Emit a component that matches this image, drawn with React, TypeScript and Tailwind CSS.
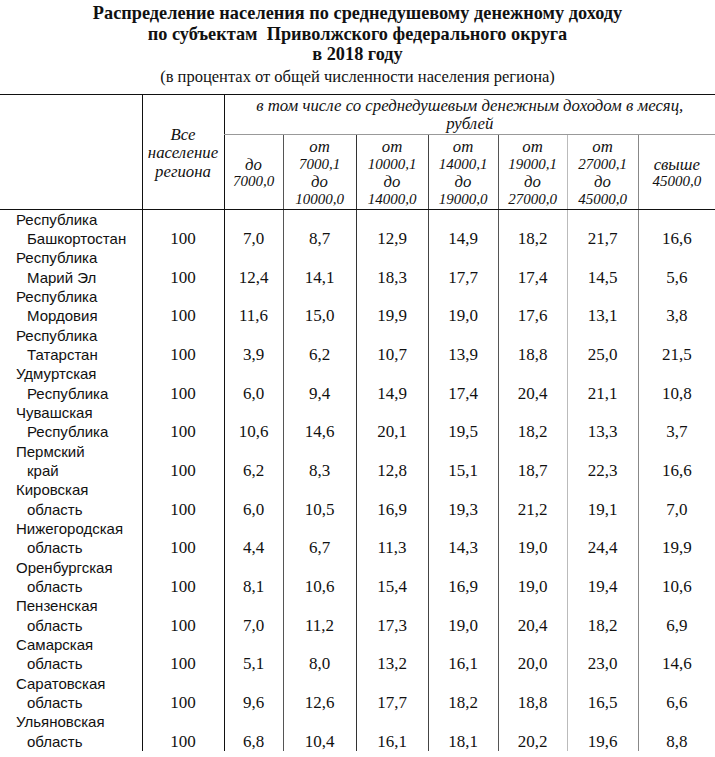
const rows: [string, string, string[]][] = [
  ["Республика", "Башкортостан", ["7,0", "8,7", "12,9", "14,9", "18,2", "21,7", "16,6"]],
  ["Республика", "Марий Эл", ["12,4", "14,1", "18,3", "17,7", "17,4", "14,5", "5,6"]],
  ["Республика", "Мордовия", ["11,6", "15,0", "19,9", "19,0", "17,6", "13,1", "3,8"]],
  ["Республика", "Татарстан", ["3,9", "6,2", "10,7", "13,9", "18,8", "25,0", "21,5"]],
  ["Удмуртская", "Республика", ["6,0", "9,4", "14,9", "17,4", "20,4", "21,1", "10,8"]],
  ["Чувашская", "Республика", ["10,6", "14,6", "20,1", "19,5", "18,2", "13,3", "3,7"]],
  ["Пермский", "край", ["6,2", "8,3", "12,8", "15,1", "18,7", "22,3", "16,6"]],
  ["Кировская", "область", ["6,0", "10,5", "16,9", "19,3", "21,2", "19,1", "7,0"]],
  ["Нижегородская", "область", ["4,4", "6,7", "11,3", "14,3", "19,0", "24,4", "19,9"]],
  ["Оренбургская", "область", ["8,1", "10,6", "15,4", "16,9", "19,0", "19,4", "10,6"]],
  ["Пензенская", "область", ["7,0", "11,2", "17,3", "19,0", "20,4", "18,2", "6,9"]],
  ["Самарская", "область", ["5,1", "8,0", "13,2", "16,1", "20,0", "23,0", "14,6"]],
  ["Саратовская", "область", ["9,6", "12,6", "17,7", "18,2", "18,8", "16,5", "6,6"]],
  ["Ульяновская", "область", ["6,8", "10,4", "16,1", "18,1", "20,2", "19,6", "8,8"]],
];

// left border colour of each income column (they differ in the scan)
const colBorder = [
  "border-l-[#111]",
  "border-l-[#555]",
  "border-l-[#333]",
  "border-l-[#444]",
  "border-l-[#555]",
  "border-l-[#bbb]",
  "border-l-[#888]",
];

const ranges: string[][] = [
  ["до", "7000,0"],
  ["от", "7000,1", "до", "10000,0"],
  ["от", "10000,1", "до", "14000,0"],
  ["от", "14000,1", "до", "19000,0"],
  ["от", "19000,1", "до", "27000,0"],
  ["от", "27000,1", "до", "45000,0"],
  ["свыше", "45000,0"],
];

const serif = "font-['Liberation_Serif','Times_New_Roman',serif]";

export default function App() {
  return (
    <div className={`w-[715px] h-[757px] overflow-hidden bg-white text-[#111] ${serif}`}>
      <div className="pt-[3px] text-center">
        <h1 className="text-[18.3px] leading-[20.5px] font-bold">
          Распределение населения по среднедушевому денежному доходу
          <br />
          по субъектам&nbsp; Приволжского федерального округа
          <br />в 2018 году
        </h1>
        <p className="mt-[2px] text-[16.5px] leading-[20px]">(в процентах от общей численности населения региона)</p>
      </div>

      <table className="mt-[7px] w-[715px] table-fixed border-collapse">
        <colgroup>
          <col className="w-[142px]" />
          <col className="w-[82px]" />
          <col className="w-[59px]" />
          <col className="w-[73px]" />
          <col className="w-[72px]" />
          <col className="w-[70px]" />
          <col className="w-[69px]" />
          <col className="w-[71px]" />
          <col className="w-[77px]" />
        </colgroup>
        <thead className="italic text-[16.8px]">
          <tr className="h-[37px] border-t border-t-[#111]">
            <th rowSpan={2} className="border-b border-b-[#111]"></th>
            <th
              rowSpan={2}
              className="border-l border-l-[#111] border-b border-b-[#111] font-normal leading-[18.5px] align-middle pt-[4px]"
            >
              Все
              <br />
              население
              <br />
              региона
            </th>
            <th
              colSpan={7}
              className="border-l border-l-[#111] border-b border-b-[#999] font-normal leading-[18.5px] align-top pt-[2px]"
            >
              в том числе со среднедушевым денежным доходом в месяц,
              <br />
              рублей
            </th>
          </tr>
          <tr className="h-[75px]">
            {ranges.map((r, i) => (
              <th
                key={i}
                className={`border-l ${colBorder[i]} border-b border-b-[#111] font-normal leading-[17.5px] align-middle pt-[3px]`}
              >
                {r.map((t, j) => (
                  <div key={j} className={/\d/.test(t) ? "text-[15px]" : ""}>
                    {t}
                  </div>
                ))}
              </th>
            ))}
          </tr>
        </thead>
        <tbody>
          {rows.map(([a, b, vals], i) => (
            <tr key={i} className="h-[38.7px]">
              <td className="pl-[16px] font-['Liberation_Sans',Arial,sans-serif] text-[15px] leading-[19.35px] align-top">
                <div>{a}</div>
                <div className="pl-[11px]">{b}</div>
              </td>
              <td className="border-l border-l-[#111] text-center text-[17px] leading-[19.35px] align-bottom">
                100
              </td>
              {vals.map((v, j) => (
                <td
                  key={j}
                  className={`border-l ${colBorder[j]} text-center text-[17px] leading-[19.35px] align-bottom`}
                >
                  {v}
                </td>
              ))}
            </tr>
          ))}
        </tbody>
      </table>
    </div>
  );
}
